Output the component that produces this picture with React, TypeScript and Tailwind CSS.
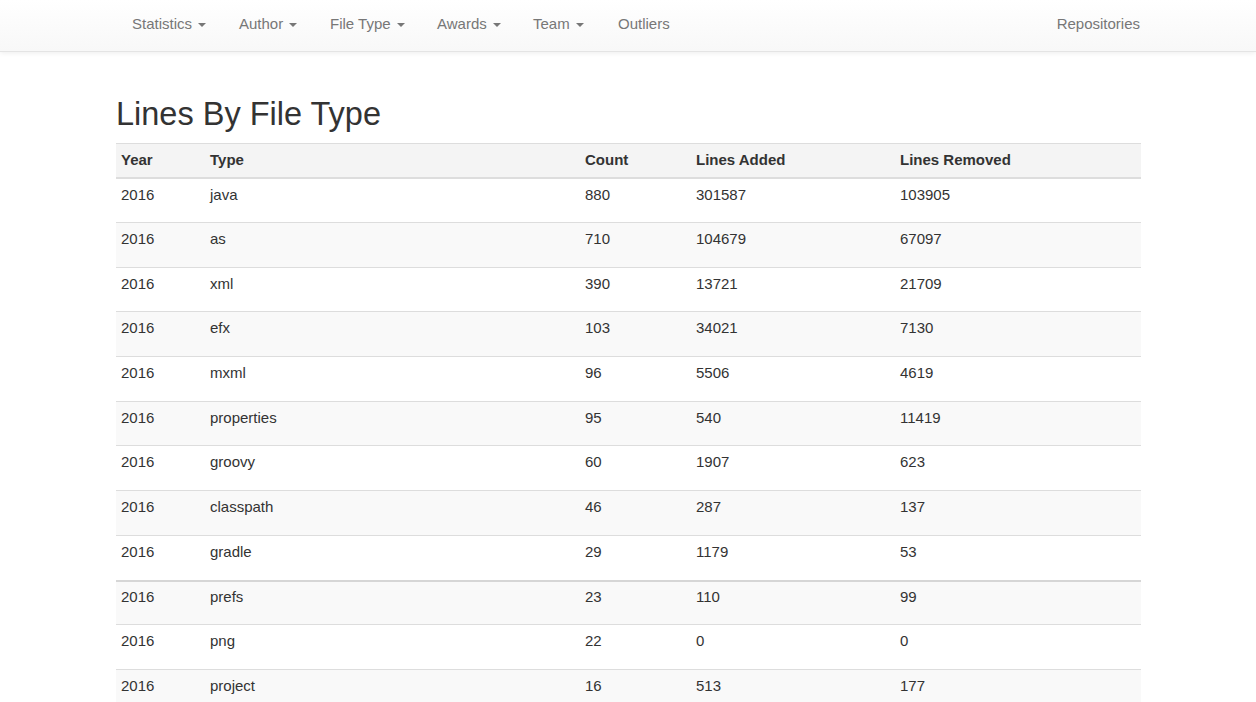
import React from 'react';

type NavItem = { label: string; width: string; caret: boolean };

const navItems: NavItem[] = [
  { label: 'Statistics', width: 'w-[107px]', caret: true },
  { label: 'Author', width: 'w-[91px]', caret: true },
  { label: 'File Type', width: 'w-[107px]', caret: true },
  { label: 'Awards', width: 'w-[96px]', caret: true },
  { label: 'Team', width: 'w-[85px]', caret: true },
  { label: 'Outliers', width: 'w-[80px]', caret: false },
];

const rows: [string, string, string, string, string][] = [
  ['2016', 'java', '880', '301587', '103905'],
  ['2016', 'as', '710', '104679', '67097'],
  ['2016', 'xml', '390', '13721', '21709'],
  ['2016', 'efx', '103', '34021', '7130'],
  ['2016', 'mxml', '96', '5506', '4619'],
  ['2016', 'properties', '95', '540', '11419'],
  ['2016', 'groovy', '60', '1907', '623'],
  ['2016', 'classpath', '46', '287', '137'],
  ['2016', 'gradle', '29', '1179', '53'],
  ['2016', 'prefs', '23', '110', '99'],
  ['2016', 'png', '22', '0', '0'],
  ['2016', 'project', '16', '513', '177'],
];

const colWidths = ['w-[89px]', 'w-[375px]', 'w-[111px]', 'w-[204px]', 'w-[246px]'];
const headers = ['Year', 'Type', 'Count', 'Lines Added', 'Lines Removed'];

const Caret = () => (
  <span className="ml-[2px] inline-block h-0 w-0 align-middle border-t-[4px] border-x-[4px] border-t-[#777] border-x-transparent" />
);

export default function App() {
  return (
    <div className="min-h-[702px] bg-white text-[#333] font-['Liberation_Sans',Arial,sans-serif]">
      {/* Navbar */}
      <nav className="h-[52px] border-b border-[#e4e4e4] bg-gradient-to-b from-white to-[#f8f8f8] shadow-[0_1px_5px_rgba(0,0,0,0.075)]">
        <div className="pl-[116px] pr-[115px] flex justify-between">
          <ul className="flex">
            {navItems.map((item) => (
              <li
                key={item.label}
                className={`${item.width} pl-[16px] pt-[14px] leading-5 text-[15px] text-[#777] whitespace-nowrap`}
              >
                {item.label}
                {item.caret && (
                  <>
                    {' '}
                    <Caret />
                  </>
                )}
              </li>
            ))}
          </ul>
          <div className="pt-[14px] pr-[1px] leading-5 text-[15px] text-[#777]">Repositories</div>
        </div>
      </nav>

      <div className="pl-[116px] pr-[115px]">
        <h1 className="mt-[46px] mb-[12px] text-[32.5px] leading-[33px] font-normal text-[#333]">
          Lines By File Type
        </h1>

        {/* Table */}
        <div className="text-[15px] leading-5">
          <div className="flex border-t border-b-2 border-[#ddd] bg-[#f4f4f4] h-[36px] font-bold">
            {headers.map((h, i) => (
              <div key={h} className={`${colWidths[i]} px-[5px] pt-[6px]`}>
                {h}
              </div>
            ))}
          </div>
          {rows.map((r, ri) => {
            const first = ri === 0;
            const thick = r[1] === 'prefs';
            return (
              <div
                key={r[1]}
                className={`flex ${first ? 'h-[43px]' : 'h-[44.7px]'} ${
                  first ? '' : thick ? 'border-t-2 border-[#d6d6d6]' : 'border-t border-[#ddd]'
                } ${ri % 2 === 1 ? 'bg-[#f9f9f9]' : 'bg-white'}`}
              >
                {r.map((c, ci) => (
                  <div key={ci} className={`${colWidths[ci]} px-[5px] ${thick ? 'pt-[5px]' : 'pt-[6px]'}`}>
                    {c}
                  </div>
                ))}
              </div>
            );
          })}
        </div>
      </div>
    </div>
  );
}
